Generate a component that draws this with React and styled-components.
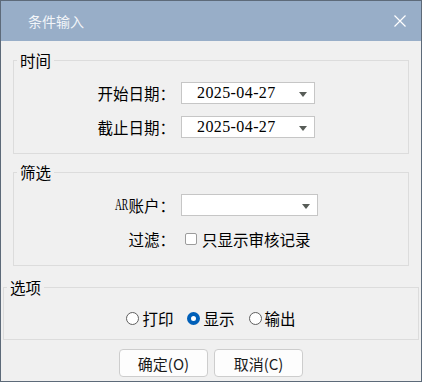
import styled, { createGlobalStyle } from "styled-components";

const GlobalStyle = createGlobalStyle`
    html, body {
        margin: 0;
        padding: 0;
        background: #f0f0f0;
    }
    body {
        font-family: "Noto Sans CJK SC", "Noto Sans", sans-serif;
        color: #000;
    }
`;

const Window = styled.div`
    width: 422px;
    height: 382px;
    box-sizing: border-box;
    border: 1px solid #5d6a79;
    background: #f0f0f0;
    display: flex;
    flex-direction: column;
`;

const TitleBar = styled.div`
    height: 40px;
    flex-shrink: 0;
    background: #98aec8;
    display: flex;
    align-items: center;
    justify-content: space-between;
    padding: 0 15px 0 27px;
    color: #f2f5f9;
    font-size: 14px;
`;

const CloseIcon = styled.svg`
    width: 12px;
    height: 12px;
    display: block;
`;

const Group = styled.fieldset`
    margin: ${(p) => p.$top}px ${(p) => p.$inset}px 0;
    padding: 0 0 ${(p) => p.$bottom}px;
    border: 1px solid #dcdcdc;
    min-width: 0;
`;

const Legend = styled.legend`
    margin-left: 3px;
    padding: 0 3px;
    font-size: 15.5px;
    line-height: 17px;
`;

const FormGrid = styled.div`
    display: grid;
    grid-template-columns: 161px auto;
    column-gap: 6px;
    row-gap: 12px;
    align-items: center;
    padding-top: 13px;
`;

const Label = styled.div`
    height: 22px;
    text-align: right;
    font-size: 15.5px;
    line-height: 22px;
    white-space: nowrap;
`;

const Latin = styled.span`
    display: inline-block;
    font-family: "Liberation Serif", serif;
    font-size: 16px;
    line-height: 22px;
    vertical-align: top;
    transform: scaleX(0.6);
    transform-origin: right center;
`;

const Select = styled.div`
    width: ${(p) => p.$width}px;
    height: 22px;
    box-sizing: border-box;
    border: 1px solid #c6c6c6;
    background: #fff;
    display: flex;
    align-items: center;
    justify-content: space-between;
    padding: 0 7px 0 15px;
`;

const DateText = styled.span`
    font-family: "Liberation Serif", serif;
    font-size: 16px;
    letter-spacing: 0.4px;
    line-height: 20px;
`;

const Arrow = styled.span`
    width: 0;
    height: 0;
    margin-top: 3px;
    margin-left: auto;
    border-left: 4px solid transparent;
    border-right: 4px solid transparent;
    border-top: 5px solid #575c57;
`;

const CheckRow = styled.label`
    display: flex;
    align-items: center;
    gap: 5px;
    padding-left: 4px;
    height: 22px;
    font-size: 15.5px;
    line-height: 22px;
`;

const CheckBox = styled.span`
    width: 12px;
    height: 12px;
    box-sizing: border-box;
    border: 1px solid #9c9c9c;
    border-radius: 2px;
    background: #fff;
`;

const RadioRow = styled.div`
    display: flex;
    justify-content: center;
    align-items: center;
    gap: 14px;
    padding-top: 11px;
    height: 22px;
`;

const RadioItem = styled.label`
    display: flex;
    align-items: center;
    gap: 3px;
    font-size: 15.5px;
    line-height: 22px;
`;

const RadioDot = styled.span`
    width: 13px;
    height: 13px;
    box-sizing: border-box;
    border-radius: 50%;
    border: ${(p) => (p.$checked ? "4px solid #005fb8" : "1px solid #5f5f5f")};
    background: #fff;
`;

const ButtonBar = styled.div`
    display: flex;
    justify-content: center;
    gap: 6px;
    margin-top: 9px;
`;

const Button = styled.button`
    width: 89px;
    height: 28px;
    box-sizing: border-box;
    border: 1px solid #cdcdcd;
    border-radius: 4px;
    background: #fdfdfd;
    font-family: "Noto Sans CJK SC", sans-serif;
    font-size: 15px;
    color: #1a1a1a;
    padding: 0;
`;

function DateSelect({ value }) {
    return (
        <Select $width={134}>
            <DateText>{value}</DateText>
            <Arrow />
        </Select>
    );
}

export default function App() {
    const radios = [
        { label: "打印", checked: false },
        { label: "显示", checked: true },
        { label: "输出", checked: false },
    ];

    return (
        <>
            <GlobalStyle />
            <Window>
                <TitleBar>
                    <span>条件输入</span>
                    <CloseIcon viewBox="0 0 12 12">
                        <path d="M0.5 0.5 L11.5 11.5 M11.5 0.5 L0.5 11.5" stroke="#fff" strokeWidth="1.2" fill="none" />
                    </CloseIcon>
                </TitleBar>

                <Group $top={11} $inset={12} $bottom={15}>
                    <Legend>时间</Legend>
                    <FormGrid>
                        <Label>开始日期：</Label>
                        <DateSelect value="2025-04-27" />
                        <Label>截止日期：</Label>
                        <DateSelect value="2025-04-27" />
                    </FormGrid>
                </Group>

                <Group $top={10} $inset={12} $bottom={15}>
                    <Legend>筛选</Legend>
                    <FormGrid>
                        <Label><Latin>AR</Latin>账户：</Label>
                        <Select $width={137}>
                            <Arrow />
                        </Select>
                        <Label>过滤：</Label>
                        <CheckRow>
                            <CheckBox />
                            只显示审核记录
                        </CheckRow>
                    </FormGrid>
                </Group>

                <Group $top={13} $inset={2} $bottom={10}>
                    <Legend>选项</Legend>
                    <RadioRow>
                        {radios.map((r) => (
                            <RadioItem key={r.label}>
                                <RadioDot $checked={r.checked} />
                                {r.label}
                            </RadioItem>
                        ))}
                    </RadioRow>
                </Group>

                <ButtonBar>
                    <Button>确定(O)</Button>
                    <Button>取消(C)</Button>
                </ButtonBar>
            </Window>
        </>
    );
}
